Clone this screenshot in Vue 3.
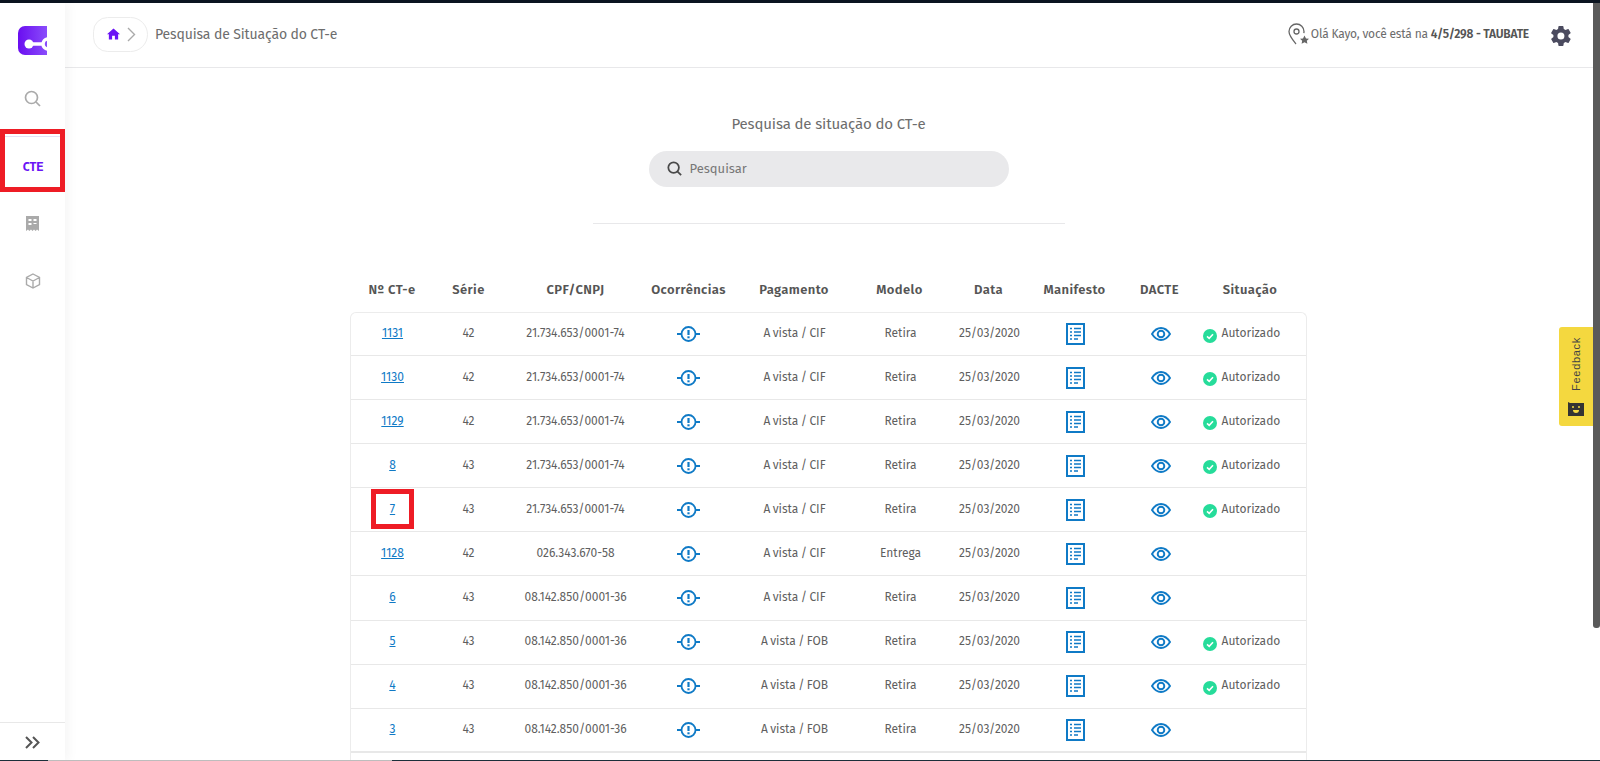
<script setup>
const rows = [
  { n: '1131', s: '42', doc: '21.734.653/0001-74', p: 'A vista / CIF', m: 'Retira', ok: true },
  { n: '1130', s: '42', doc: '21.734.653/0001-74', p: 'A vista / CIF', m: 'Retira', ok: true },
  { n: '1129', s: '42', doc: '21.734.653/0001-74', p: 'A vista / CIF', m: 'Retira', ok: true },
  { n: '8', s: '43', doc: '21.734.653/0001-74', p: 'A vista / CIF', m: 'Retira', ok: true },
  { n: '7', s: '43', doc: '21.734.653/0001-74', p: 'A vista / CIF', m: 'Retira', ok: true, mark: true },
  { n: '1128', s: '42', doc: '026.343.670-58', p: 'A vista / CIF', m: 'Entrega', ok: false },
  { n: '6', s: '43', doc: '08.142.850/0001-36', p: 'A vista / CIF', m: 'Retira', ok: false },
  { n: '5', s: '43', doc: '08.142.850/0001-36', p: 'A vista / FOB', m: 'Retira', ok: true },
  { n: '4', s: '43', doc: '08.142.850/0001-36', p: 'A vista / FOB', m: 'Retira', ok: true },
  { n: '3', s: '43', doc: '08.142.850/0001-36', p: 'A vista / FOB', m: 'Retira', ok: false },
]
const heads = ['Nº CT-e', 'Série', 'CPF/CNPJ', 'Ocorrências', 'Pagamento', 'Modelo', 'Data', 'Manifesto', 'DACTE', 'Situação']
</script>

<template>
  <div class="page">
    <div class="topstrip"></div>
    <div class="shell">
      <aside class="side">
        <div class="logo">
          <svg width="29" height="29" viewBox="0 0 29 29">
            <defs>
              <linearGradient id="lg" x1="0" y1="0" x2="1" y2="0">
                <stop offset="0" stop-color="#6a0df0" />
                <stop offset="1" stop-color="#8a4dfb" />
              </linearGradient>
            </defs>
            <path d="M7 0H29V29H7a7 7 0 0 1-7-7V7a7 7 0 0 1 7-7z" fill="url(#lg)" />
            <circle cx="11" cy="18" r="4.500" fill="#fff" />
            <path d="M11 18H25" stroke="#fff" stroke-width="3.500" />
            <circle cx="30" cy="18" r="5" fill="none" stroke="#fff" stroke-width="3.500" />
          </svg>
        </div>
        <div class="nav first">
          <svg width="17" height="17" viewBox="0 0 17 17" fill="none" stroke="#aaa" stroke-width="1.700">
            <circle cx="7.500" cy="7.500" r="6" /><path d="M12 12l4 4" />
          </svg>
        </div>
        <div class="nav cte"><span class="ctelabel">CTE</span><span class="redbox"></span></div>
        <div class="nav">
          <svg width="13" height="15" viewBox="0 0 13 15" fill="#aaa">
            <path d="M0 0H13V15L11 13.500 9.700 15 8 13.500 6.500 15 5 13.500 3.300 15 2 13.500 0 15Z" />
            <path d="M2.500 3h3v2h-3zM7.500 3h3v2h-3zM2.500 7h3v2h-3zM7.500 7h3v1h-3z" fill="#fff" />
          </svg>
        </div>
        <div class="nav">
          <svg width="16" height="16" viewBox="0 0 16 16" fill="none" stroke="#aaa" stroke-width="1.400">
            <path d="M8 1l6.500 3.500v7L8 15l-6.500-3.500v-7zM1.500 4.500L8 8l6.500-3.500M8 8v7" />
          </svg>
        </div>
        <div class="grow"></div>
        <div class="expand">
          <svg width="16" height="13" viewBox="0 0 16 13" fill="none" stroke="#555" stroke-width="2">
            <path d="M1 1l5.500 5.500L1 12M8 1l5.500 5.500L8 12" />
          </svg>
        </div>
      </aside>

      <div class="main">
        <header class="top">
          <div class="crumb">
            <svg width="13" height="12" viewBox="0 0 14 12" fill="#6a14f5">
              <path d="M7 0L14 6.300H12V12H8.500V8H5.500V12H2V6.300H0Z" />
            </svg>
            <svg class="chev" width="9" height="15" viewBox="0 0 9 15" fill="none" stroke="#aaa" stroke-width="1.400">
              <path d="M1 1l6.500 6.500L1 14" />
            </svg>
          </div>
          <h1 class="title">Pesquisa de Situação do CT-e</h1>
          <div class="grow"></div>
          <svg class="pin" width="22" height="23" viewBox="0 0 22 23" fill="none" stroke="#666" stroke-width="1.300">
            <path d="M8 21C4 16 1 12.500 1 8.500a7.500 7.500 0 0 1 15 0c0 .6 0 1-.2 1.600" />
            <circle cx="8.500" cy="8.500" r="2.500" />
            <path d="M16.500 12.500l1.500 3 3 .3-2.200 2 .6 3-2.900-1.500-2.900 1.500.6-3-2.200-2 3-.3z" fill="#666" stroke="none" />
          </svg>
          <span class="hello">Olá Kayo, você está na <b>4/5/298 - TAUBATE</b></span>
          <svg class="gear" width="24" height="24" viewBox="0 0 24 24" fill="#4b4b5f">
            <path d="M19.400 13c.04-.33.060-.66.060-1s-.020-.67-.060-1l2.100-1.650a.5.5 0 0 0 .12-.64l-2-3.460a.5.5 0 0 0-.61-.22l-2.490 1a7.300 7.300 0 0 0-1.730-1l-.38-2.650A.49.490 0 0 0 13.920 2h-4a.49.490 0 0 0-.49.420l-.38 2.650a7.700 7.700 0 0 0-1.730 1l-2.490-1a.49.490 0 0 0-.61.220l-2 3.460a.49.490 0 0 0 .12.640L4.440 11a7.900 7.900 0 0 0 0 2l-2.100 1.650a.5.5 0 0 0-.12.640l2 3.460c.12.220.38.300.61.220l2.490-1c.52.400 1.080.73 1.730 1l.38 2.650c.04.240.25.420.49.420h4c.25 0 .46-.18.49-.42l.38-2.650c.62-.26 1.200-.6 1.730-1l2.490 1c.23.080.49 0 .61-.22l2-3.460a.5.5 0 0 0-.12-.64zM11.920 15.500a3.500 3.500 0 1 1 0-7 3.500 3.500 0 0 1 0 7z" />
          </svg>
        </header>

        <section class="content">
          <h2 class="heading">Pesquisa de situação do CT-e</h2>
          <div class="search">
            <svg width="15" height="15" viewBox="0 0 17 17" fill="none" stroke="#4a4a4a" stroke-width="2">
              <circle cx="7.500" cy="7.500" r="6" /><path d="M12 12l4 4" />
            </svg>
            <span>Pesquisar</span>
          </div>
          <div class="rule"></div>

          <div class="tablewrap">
            <div class="row head">
              <div v-for="h in heads" :key="h" class="cell">{{ h }}</div>
            </div>
            <div class="card">
              <div v-for="r in rows" :key="r.n" class="row body">
                <div class="cell">
                  <a class="link" :class="{ marked: r.mark }">{{ r.n }}</a>
                </div>
                <div class="cell">{{ r.s }}</div>
                <div class="cell">{{ r.doc }}</div>
                <div class="cell">
                  <svg class="ic" width="23" height="18" viewBox="0 0 23 18" fill="none" stroke="#0f7ac6" stroke-width="1.800">
                    <circle cx="11.500" cy="9" r="7" />
                    <path d="M0 9H4.500M18.500 9H23" />
                    <path d="M11.500 5v5" stroke-width="2.200" />
                    <path d="M11.500 11.300v2" stroke-width="2.200" />
                  </svg>
                </div>
                <div class="cell">{{ r.p }}</div>
                <div class="cell">{{ r.m }}</div>
                <div class="cell">25/03/2020</div>
                <div class="cell">
                  <svg class="ic" width="19" height="22" viewBox="0 0 19 22" fill="none" stroke="#0f7ac6">
                    <rect x="1" y="1" width="17" height="20" stroke-width="2" />
                    <path d="M4 5.500h2M8 5.500h7M4 9h2M8 9h7M4 12.500h2M8 12.500h7M4 16h2M8 16h4" stroke-width="1.600" />
                  </svg>
                </div>
                <div class="cell">
                  <svg class="ic" width="20" height="14" viewBox="0 0 20 14" fill="none" stroke="#0f7ac6" stroke-width="1.900">
                    <path d="M1 7C3.500 3 6.500 1 10 1s6.500 2 9 6c-2.500 4-5.500 6-9 6S3.500 11 1 7z" />
                    <circle cx="10" cy="7" r="3.300" />
                  </svg>
                </div>
                <div class="cell status">
                  <template v-if="r.ok">
                    <svg class="tick" width="14" height="14" viewBox="0 0 14 14">
                      <circle cx="7" cy="7" r="7" fill="#26dc9a" />
                      <path d="M4 7.300l2.200 2L10 5.300" fill="none" stroke="#fff" stroke-width="1.600" />
                    </svg>
                    <span>Autorizado</span>
                  </template>
                </div>
              </div>
              <div class="more"></div>
            </div>
          </div>
        </section>
      </div>
    </div>

    <div class="feedback">
      <span class="fbtext">Feedback</span>
      <svg width="16" height="14" viewBox="0 0 16 14">
        <path d="M0 0L2 1H16V14H0Z" fill="#333" />
        <circle cx="5" cy="5" r="1" fill="#f4d83f" /><circle cx="11" cy="5" r="1" fill="#f4d83f" />
        <path d="M5 8h6a3 3 0 0 1-6 0z" fill="#f4d83f" />
      </svg>
    </div>
    <div class="scroll"></div>
    <div class="bottomstrip"><i class="d1"></i><i class="d2"></i><i class="d3"></i></div>
  </div>
</template>

<style>
html, body { margin: 0; height: 100%; overflow: hidden; background: #fff; }
</style>

<style scoped>
.page {
  position: relative;
  width: 1600px;
  height: 761px;
  overflow: hidden;
  background: #fff;
  color: #5f5f5f;
  font-family: "Fira Sans", "Noto Sans", "Open Sans", sans-serif;
  font-size: 13px;
}
.topstrip { height: 3px; background: #0b1420; }
.shell { display: flex; height: 758px; }
.side {
  width: 65px;
  flex: none;
  display: flex;
  flex-direction: column;
  background: #fff;
  box-shadow: 4px 0 10px rgba(0, 0, 0, 0.04);
  position: relative;
}
.logo { padding: 23px 0 0 18px; height: 29px; }
.nav { height: 57px; display: flex; align-items: center; justify-content: center; position: relative; }
.nav.first { margin-top: 17px; height: 52px; margin-bottom: 14px; }
.ctelabel {
  font-family: "DejaVu Sans Mono", monospace;
  font-weight: 700;
  font-size: 13px;
  letter-spacing: -1px;
  color: #6a14f5;
}
.redbox {
  position: absolute;
  left: 0;
  top: -9px;
  width: 65px;
  height: 63px;
  box-sizing: border-box;
  border: 5px solid #ee1c25;
  box-shadow: inset 0 2px 0 #fff, inset 0 3px 0 #e6e0f5;
}
.grow { flex: 1; }
.expand {
  height: 39px;
  border-top: 1px solid #e8e8e8;
  display: flex;
  align-items: center;
  justify-content: center;
  box-sizing: border-box;
}
.main { flex: 1; min-width: 0; display: flex; flex-direction: column; }
.top {
  height: 65px;
  flex: none;
  border-bottom: 1px solid #e8e8ea;
  display: flex;
  align-items: center;
  padding: 0 27px 2px 28px;
  box-sizing: border-box;
}
.crumb {
  width: 55px;
  height: 35px;
  box-sizing: border-box;
  border: 1px solid #ececec;
  border-radius: 15px 18px 18px 15px;
  display: flex;
  align-items: center;
  gap: 7px;
  padding-left: 13px;
}
.title { margin: 0 0 0 7px; font-size: 14px; letter-spacing: -0.13px; font-weight: 400; color: #6d6d6d; }
.pin { margin-right: 1px; }
.hello { font-size: 12px; letter-spacing: -0.2px; color: #6c6c6c; }
.hello b { font-weight: 600; color: #555; }
.gear { margin-left: 20px; margin-top: 3px; }
.content { display: flex; flex-direction: column; align-items: center; flex: 1; overflow: hidden; padding-right: 8px; }
.heading { margin: 46px 0 0; font-size: 15px; letter-spacing: -0.14px; font-weight: 400; color: #6d6d6d; line-height: 20px; }
.search {
  margin-top: 17px;
  flex: none;
  width: 360px;
  height: 36px;
  border-radius: 18px;
  background: #e9e9eb;
  display: flex;
  align-items: center;
  gap: 8px;
  padding: 0 0 1px 18px;
  box-sizing: border-box;
  font-size: 13px;
  color: #777;
}
.rule { width: 472px; height: 1px; flex: none; background: #e8e8ea; margin-top: 36px; }
.tablewrap { margin: 42px 1px 0 0; width: 957px; flex: none; }
.row {
  display: grid;
  grid-template-columns: 85px 68px 146px 80px 131px 80px 98px 74px 96px 85px 14px;
  align-items: center;
}
.cell { text-align: center; white-space: nowrap; }
.head { height: 46px; font-weight: 600; font-size: 13px; letter-spacing: 0.4px; color: #555; }
.card {
  border: 1px solid #ececec;
  border-bottom: none;
  border-radius: 6px 6px 0 0;
}
.body {
  height: 44.1px;
  border-bottom: 1px solid #e8e8e8;
  box-sizing: border-box;
  grid-template-columns: 84px 68px 146px 80px 132px 80px 98px 74px 96px 84px 14px;
  font-size: 12px;
  color: #5f5f5f;
  word-spacing: -0.8px;
}
.body:first-child { height: 43px; }
.body:nth-last-child(2) { border-bottom-width: 2px; }
.body .cell { padding-bottom: 2px; }
.more { height: 30px; }
.link { color: #0f7ac6; text-decoration: underline; position: relative; display: inline-block; }
.marked::after {
  content: "";
  position: absolute;
  left: 50%;
  top: 50%;
  margin: -20px 0 0 -21px;
  width: 43px;
  height: 40px;
  box-sizing: border-box;
  border: 5px solid #ee1c25;
}
.ic { display: block; margin: 2px auto 0; }
.status { display: flex; align-items: center; gap: 5px; text-align: left; margin-left: -6px; }
.tick { margin-top: 5px; }
.feedback {
  position: absolute;
  right: 7px;
  top: 327px;
  width: 34px;
  height: 99px;
  background: #f4d83f;
  border-radius: 3px 0 0 3px;
  display: flex;
  flex-direction: column;
  align-items: center;
  padding-top: 10px;
  box-sizing: border-box;
  color: #444;
}
.fbtext {
  writing-mode: vertical-rl;
  transform: rotate(180deg);
  font-family: "Liberation Sans", sans-serif;
  font-size: 11px;
  letter-spacing: 0.7px;
  margin-bottom: 11px;
}
.scroll { position: absolute; right: 0; top: 3px; width: 7px; height: 625px; background: #5a5a5a; border-radius: 0 0 3px 3px; }
.bottomstrip { position: absolute; left: 0; right: 0; bottom: 0; height: 1px; display: flex; }
.bottomstrip i { display: block; height: 1px; }
.d1 { width: 48px; background: #1c2f3a; }
.d2 { width: 344px; background: #bdbdbd; }
.d3 { flex: 1; background: #1c2f3a; }
</style>
